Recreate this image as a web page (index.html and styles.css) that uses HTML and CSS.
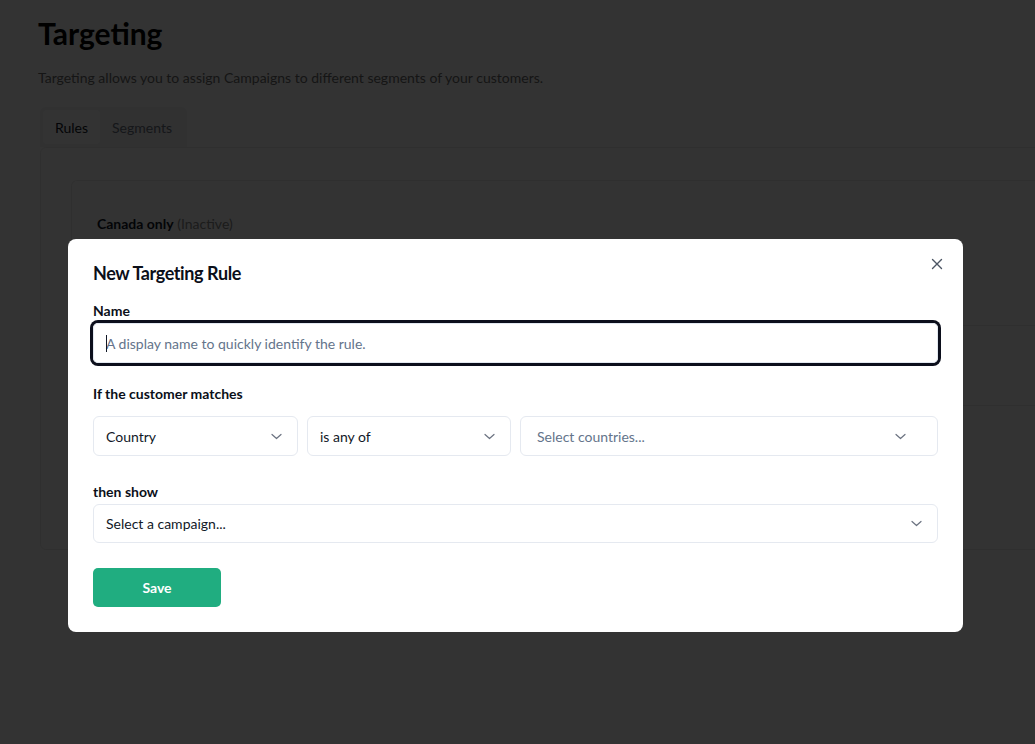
FILE: index.html
```html
<!DOCTYPE html>
<html lang="en">
<head>
    <meta charset="UTF-8">
    <title>Targeting</title>
    <link rel="stylesheet" href="styles.css">
</head>
<body>
    <div class="page">
        <h1>Targeting</h1>
        <p class="lead">Targeting allows you to assign Campaigns to different segments of your customers.</p>

        <div class="tabs">
            <div class="tab active">Rules</div>
            <div class="tab">Segments</div>
        </div>

        <div class="card">
            <div class="rule-list">
                <div class="rule-head">
                    <strong>Canada only</strong> <span class="muted">(Inactive)</span>
                </div>
                <div class="rule-row"></div>
                <div class="rule-row last"></div>
            </div>
        </div>
    </div>

    <div class="overlay">
        <div class="modal">
            <div class="modal-header">
                <h2>New Targeting Rule</h2>
                <button class="close" aria-label="Close">
                    <svg width="12" height="12" viewBox="0 0 12 12" fill="none" stroke="#4b5563" stroke-width="1.4" stroke-linecap="round">
                        <path d="M1.5 1.5l9 9M10.5 1.5l-9 9"/>
                    </svg>
                </button>
            </div>

            <label class="label">Name</label>
            <div class="input focused">
                <span class="placeholder">A display name to quickly identify the rule.</span>
            </div>

            <label class="label matches">If the customer matches</label>
            <div class="condition">
                <div class="select">
                    <span>Country</span>
                    <svg class="chevron" width="11" height="7" viewBox="0 0 11 7" fill="none" stroke="#6b7280" stroke-width="1.2" stroke-linecap="round" stroke-linejoin="round"><path d="M1 1.5l4.5 4 4.5-4"/></svg>
                </div>
                <div class="select">
                    <span>is any of</span>
                    <svg class="chevron" width="11" height="7" viewBox="0 0 11 7" fill="none" stroke="#6b7280" stroke-width="1.2" stroke-linecap="round" stroke-linejoin="round"><path d="M1 1.5l4.5 4 4.5-4"/></svg>
                </div>
                <div class="select multi">
                    <span class="placeholder">Select countries...</span>
                    <svg class="chevron" width="11" height="7" viewBox="0 0 11 7" fill="none" stroke="#6b7280" stroke-width="1.2" stroke-linecap="round" stroke-linejoin="round"><path d="M1 1.5l4.5 4 4.5-4"/></svg>
                </div>
            </div>

            <label class="label show">then show</label>
            <div class="select wide">
                <span>Select a campaign...</span>
                <svg class="chevron" width="11" height="7" viewBox="0 0 11 7" fill="none" stroke="#6b7280" stroke-width="1.2" stroke-linecap="round" stroke-linejoin="round"><path d="M1 1.5l4.5 4 4.5-4"/></svg>
            </div>

            <button class="save">Save</button>
        </div>
    </div>
</body>
</html>
```

FILE: styles.css
```css
* {
    box-sizing: border-box;
}
html, body {
    margin: 0;
    height: 100%;
    overflow: hidden;
}
body {
    font-family: Lato, "Open Sans", sans-serif;
    background: #fff;
    color: #111827;
}
.page {
    width: 1035px;
    overflow: hidden;
    padding: 15px 0 0 38px;
}
h1 {
    margin: 0;
    font-size: 30px;
    font-weight: 700;
    line-height: 36px;
    color: #000;
}
.lead {
    margin: 17px 0 19px;
    font-size: 14px;
    line-height: 20px;
    color: #6b6b6b;
}
.tabs {
    display: flex;
    width: fit-content;
    margin-left: 2px;
    padding: 3px;
    background: #f2f3f5;
    border-radius: 6px 6px 0 0;
    height: 40px;
}
.tab {
    padding: 0 12px;
    display: flex;
    align-items: center;
    font-size: 14px;
    color: #6b7280;
    border-radius: 4px;
}
.tab.active {
    background: #fff;
    color: #111827;
}
.card {
    margin-left: 2px;
    margin-right: -200px;
    border: 1px solid #ececec;
    border-radius: 6px;
    padding: 32px 30px 31px;
    height: 403px;
}
.rule-list {
    border: 1px solid #ececec;
    border-bottom: none;
    border-radius: 6px 6px 0 0;
}
.rule-head {
    height: 145px;
    padding: 33px 25px 0;
    font-size: 14px;
    line-height: 20px;
    border-bottom: 1px solid #ececec;
}
.muted {
    color: #8a8a8a;
}
.rule-row {
    height: 80px;
    border-bottom: 1px solid #ececec;
}
.rule-row.last {
    border-bottom: none;
}
.overlay {
    position: fixed;
    inset: 0;
    background: rgba(0, 0, 0, 0.8);
    padding: 239px 0 0 68px;
}
.modal {
    width: 895px;
    height: 393px;
    background: #fff;
    border-radius: 8px;
    padding: 20px 25px 25px;
}
.modal-header {
    display: flex;
    justify-content: space-between;
    align-items: flex-start;
}
h2 {
    margin: 0;
    font-size: 18px;
    font-weight: 700;
    line-height: 28px;
    letter-spacing: -0.4px;
    color: #0b0f19;
}
.close {
    border: none;
    background: none;
    padding: 0;
    margin: -4px -8px 0 0;
    width: 18px;
    height: 18px;
    display: flex;
    align-items: center;
    justify-content: center;
}
.label {
    display: block;
    margin-top: 14px;
    font-size: 14px;
    font-weight: 700;
    line-height: 20px;
    color: #0b0f19;
}
.input {
    position: relative;
    margin-top: 2px;
    height: 40px;
    border: 1px solid #e2e8f0;
    border-radius: 5px;
    display: flex;
    align-items: center;
    padding: 0 12px;
    font-size: 14px;
}
.input.focused {
    box-shadow: 0 0 0 3px #0c0f1c;
}
.input.focused::before {
    content: '';
    position: absolute;
    left: 12px;
    top: 11px;
    width: 1px;
    height: 17px;
    background: #111827;
}
.placeholder {
    color: #64748b;
}
.label.matches {
    margin-top: 21px;
}
.condition {
    margin-top: 12px;
    display: grid;
    grid-template-columns: 205px 204px 1fr;
    gap: 9px;
}
.select {
    height: 40px;
    border: 1px solid #e5e9f0;
    border-radius: 6px;
    display: flex;
    align-items: center;
    justify-content: space-between;
    padding: 0 15px 0 12px;
    font-size: 14px;
    color: #111827;
}
.select.multi {
    padding: 0 31px 0 16px;
}
.label.show {
    margin-top: 26px;
}
.select.wide {
    margin-top: 2px;
    height: 39px;
    padding-right: 15px;
}
.save {
    margin-top: 25px;
    width: 128px;
    height: 39px;
    border: none;
    border-radius: 5px;
    background: #20ad80;
    color: #fff;
    font-family: inherit;
    font-size: 14px;
    font-weight: 700;
}
```
